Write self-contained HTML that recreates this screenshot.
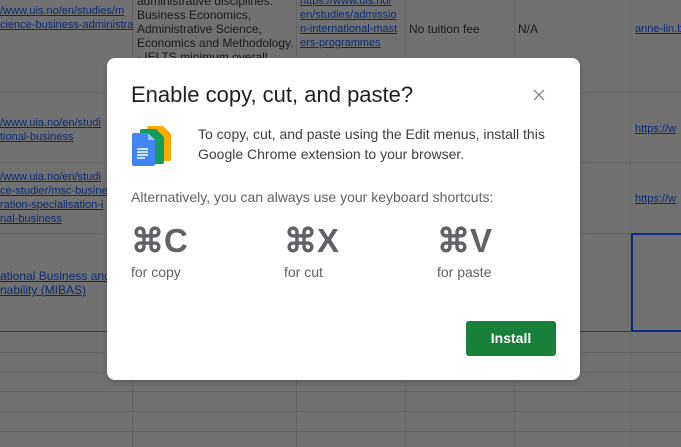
<!DOCTYPE html>
<html><head><style>
*{margin:0;padding:0;box-sizing:border-box}
body{width:681px;height:447px;overflow:hidden;background:#717171;position:relative;font-family:"Liberation Sans",Arial,sans-serif}
.h{position:absolute;left:0;width:681px;height:1px;background:#646464}
.v{position:absolute;top:0;width:1px;height:447px;background:#646464}
.t{position:absolute;font-size:12px;line-height:14px;color:#1a1a1a;white-space:nowrap}
.l{position:absolute;font-size:11px;line-height:14px;color:#0d2a73;text-decoration:underline;white-space:nowrap}
.m{position:absolute;left:107px;top:58px;width:473px;height:322px;background:#fff;border-radius:8px;box-shadow:0 2px 6px rgba(0,0,0,.2)}
.m *{position:absolute;white-space:nowrap}
.k{font-size:33px;font-weight:bold;color:#5f6368;top:165px;line-height:36px}
.f{font-size:14px;color:#5f6368;top:206px}
</style></head><body>
<div class="h" style="top:92px"></div>
<div class="h" style="top:162px"></div>
<div class="h" style="top:233px"></div>
<div class="h" style="top:331px;background:#0b5a2a"></div>
<div class="h" style="top:352px"></div>
<div class="h" style="top:372px"></div>
<div class="h" style="top:391px"></div>
<div class="h" style="top:411px"></div>
<div class="h" style="top:431px"></div>
<div class="v" style="left:132px"></div>
<div class="v" style="left:296px"></div>
<div class="v" style="left:405px"></div>
<div class="v" style="left:514px"></div>
<div class="v" style="left:630px"></div>
<div style="position:absolute;left:631px;top:233px;width:52px;height:99px;border:2px solid #0d2a8a"></div>
<div class="l" style="left:0;top:4px">/www.uis.no/en/studies/m</div>
<div class="l" style="left:0;top:18px">cience-business-administra</div>
<div class="t" style="left:137px;top:-6px">administrative disciplines:<br>Business Economics,<br>Administrative Science,<br>Economics and Methodology.<br>- IELTS minimum overall</div>
<div class="l" style="left:300px;top:-6px">https://www.uis.no/<br>en/studies/admissio<br>n-international-mast<br>ers-programmes</div>
<div class="t" style="left:409px;top:22px">No tuition fee</div>
<div class="t" style="left:518px;top:22px">N/A</div>
<div class="l" style="left:635px;top:22px">anne-lin.b</div>
<div class="l" style="left:0;top:116px">/www.uia.no/en/studi<br>tional-business</div>
<div class="l" style="left:635px;top:122px">https://w</div>
<div class="l" style="left:0;top:170px">/www.uia.no/en/studi<br>ce-studier/msc-busines<br>ration-specialisation-i<br>nal-business</div>
<div class="l" style="left:635px;top:192px">https://w</div>
<div class="l" style="left:0;top:269px;font-size:12px">ational Business and<br>nability (MIBAS)</div>
<div class="m">
<div style="left:24px;top:24px;font-size:22px;color:#202124">Enable copy, cut, and paste?</div>
<svg style="left:426px;top:31px" width="12" height="12" viewBox="0 0 12 12"><path d="M1 1L11 11M11 1L1 11" stroke="#70757a" stroke-width="1.2"/></svg>
<svg style="left:24px;top:67px" width="42" height="42" viewBox="0 0 42 42">
<path d="M18 1h14l8 8v25a2 2 0 0 1-2 2H18a2 2 0 0 1-2-2V3a2 2 0 0 1 2-2z" fill="#f9ab00"/>
<path d="M11 4h14l8 8v25a2 2 0 0 1-2 2H11a2 2 0 0 1-2-2V6a2 2 0 0 1 2-2z" fill="#0f9d58"/>
<path d="M3 8h14l7 7v24a2 2 0 0 1-2 2H3a2 2 0 0 1-2-2V10a2 2 0 0 1 2-2z" fill="#4285f4"/>
<path d="M17 8v7h7z" fill="#a1c2fa"/>
<path d="M6 24h11M6 27h11M6 30h11M6 33h8" stroke="#fff" stroke-width="1.5"/>
</svg>
<div style="left:91px;top:66px;font-size:14px;line-height:20px;color:#3c4043">To copy, cut, and paste using the Edit menus, install this<br>Google Chrome extension to your browser.</div>
<div style="left:24px;top:131px;font-size:14px;color:#5f6368">Alternatively, you can always use your keyboard shortcuts:</div>
<div class="k" style="left:24px">⌘C</div>
<div class="k" style="left:177px">⌘X</div>
<div class="k" style="left:330px">⌘V</div>
<div class="f" style="left:24px">for copy</div>
<div class="f" style="left:177px">for cut</div>
<div class="f" style="left:330px">for paste</div>
<div style="left:359px;top:263px;width:90px;height:35px;background:#188038;border-radius:3px;color:#fff;font-weight:bold;font-size:14px;line-height:35px;text-align:center">Install</div>
</div>
</body></html>
